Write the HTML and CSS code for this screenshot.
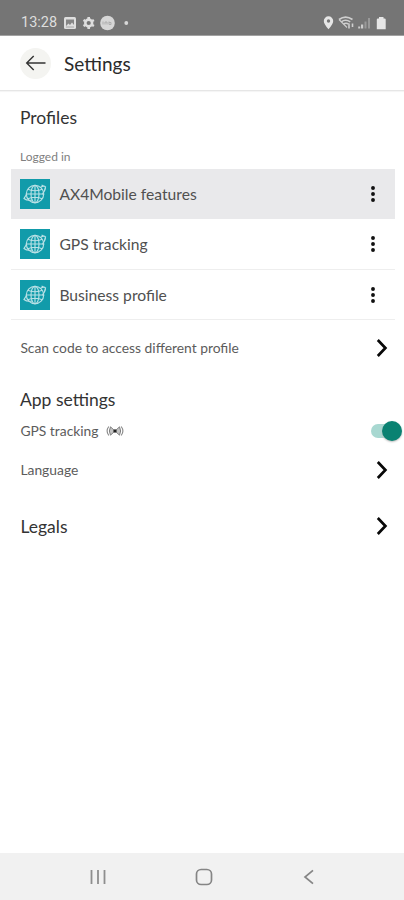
FILE: index.html
```html
<!DOCTYPE html>
<html lang="en">
<head>
<meta charset="utf-8">
<title>Settings</title>
<link rel="stylesheet" href="styles.css">
</head>
<body>
<svg class="defs" width="0" height="0" aria-hidden="true">
  <symbol id="globe" viewBox="0 0 30 30">
    <g fill="none" stroke="#b9e1e6" stroke-width="1.15" stroke-linecap="round">
      <circle cx="15" cy="15" r="8.700"/>
      <ellipse cx="15" cy="15" rx="4" ry="8.700"/>
      <path d="M15 6.300V23.700M6.300 15H23.700M8.500 10.500Q15 13 21.500 10.500M8.500 19.500Q15 17 21.500 19.500"/>
      <path d="M6.500 15.500L4 19.500Q7 22 12 21M21 8Q25 6 25.500 8.500Q25.500 11 22.500 15M22 6.200L25.500 7.800L24.500 11.500"/>
    </g>
  </symbol>
  <symbol id="dots" viewBox="0 0 6 18">
    <g fill="#111"><circle cx="3" cy="3" r="1.950"/><circle cx="3" cy="9" r="1.950"/><circle cx="3" cy="15" r="1.950"/></g>
  </symbol>
  <symbol id="chevron" viewBox="0 0 12 20">
    <path d="M1.800 2L9.400 10L1.800 18" fill="none" stroke="#080808" stroke-width="2.700"/>
  </symbol>
</svg>
<div class="screen">
  <div class="status">
    <span class="time">13:28</span>
    <svg class="status-left" width="68" height="16" viewBox="0 0 68 16">
      <rect x="1" y="2" width="12" height="12" rx="1.500" fill="#dedede"/>
      <path d="M3 11V4.500H11V10L9 7.500L7 10L5.500 8.500Z" fill="#858585"/>
      <path d="M3 12H11" stroke="#999" stroke-width=".8"/>
      <circle cx="25.700" cy="8" r="3.400" fill="none" stroke="#dedede" stroke-width="2.600"/>
      <path d="M25.700 2V4M25.700 12V14M20.500 5L22.200 6M29.200 10L30.900 11M20.500 11L22.200 10M29.200 6L30.900 5" stroke="#dedede" stroke-width="2.600"/>
      <circle cx="44.500" cy="8" r="7.300" fill="#d6d6d6"/>
      <path d="M40 6.500V9.500M42 9.500V7H44V9.500M46 6.500V9.500H48V7.500H46" fill="none" stroke="#aaa" stroke-width=".9"/>
      <circle cx="63.300" cy="8" r="1.900" fill="#d8d8d8"/>
    </svg>
    <svg class="status-right" width="66" height="16" viewBox="0 0 66 16">
      <path d="M5.500 14.300Q.8 9 .8 6A4.700 4.700 0 0 1 10.200 6Q10.200 9 5.500 14.300Z" fill="#e6e6e6"/>
      <circle cx="5.500" cy="6" r="1.700" fill="#777"/>
      <g fill="none" stroke="#cfcfcf">
        <path d="M16 4.500Q22.500-.2 29.500 4.500M18.300 6.800Q22.500 3.800 27.200 6.800M20.500 9Q23 7.400 25.500 9" stroke-width="1.600"/>
        <path d="M16 4.500L24 12.500" stroke-width="1.100"/>
        <path d="M26 8.500V13.500M29.500 12V8.500" stroke-width="1.600"/>
      </g>
      <path d="M35.200 13.500V11.500H37.200V13.500ZM38 13.500V9.500H40.200V13.500Z" fill="#ccc"/>
      <path d="M41.500 13.500V6.500H43.500V13.500ZM45 13.500V3H47V13.500Z" fill="#999"/>
      <path d="M53.800 14.300V4.500Q53.800 3.500 55 3.500H56V2H60.500V3.500H61.500Q62.700 3.500 62.700 4.500V14.300Z" fill="#e6e6e6"/>
    </svg>
  </div>
  <header class="appbar">
    <div class="back">
      <svg width="22" height="20" viewBox="0 0 22 20"><path d="M20.500 10H2M8.700 3L1.700 10L8.700 17" fill="none" stroke="#333" stroke-width="1.400"/></svg>
    </div>
    <h1>Settings</h1>
  </header>
  <main>
    <h2 class="profiles">Profiles</h2>
    <p class="logged">Logged in</p>
    <ul class="list">
      <li class="profile active"><span class="tile"><svg width="30" height="30"><use href="#globe"/></svg></span><span class="name">AX4Mobile features</span><svg width="6" height="18"><use href="#dots"/></svg></li>
      <li class="profile"><span class="tile"><svg width="30" height="30"><use href="#globe"/></svg></span><span class="name">GPS tracking</span><svg width="6" height="18"><use href="#dots"/></svg></li>
      <li class="profile"><span class="tile"><svg width="30" height="30"><use href="#globe"/></svg></span><span class="name">Business profile</span><svg width="6" height="18"><use href="#dots"/></svg></li>
    </ul>
    <div class="row scan"><span>Scan code to access different profile</span><svg width="12" height="20"><use href="#chevron"/></svg></div>
    <h2 class="app">App settings</h2>
    <div class="row gps">
      <span>GPS tracking</span>
      <svg class="signal" width="18" height="14" viewBox="0 0 18 14">
        <path d="M2.800 2.500Q-.6 7 2.800 11.500M15.200 2.500Q18.600 7 15.200 11.500" fill="none" stroke="#888" stroke-width="1.100"/>
        <path d="M4.500 2.800L9 7L4.500 11.200Q2.200 7 4.500 2.800ZM13.500 2.800L9 7L13.500 11.200Q15.800 7 13.500 2.800Z" fill="#c4c4c4" stroke="#777" stroke-width=".9"/>
        <circle cx="9" cy="7" r="1.700" fill="#222"/>
      </svg>
      <span class="switch"><span class="knob"></span></span>
    </div>
    <div class="row language"><span>Language</span><svg width="12" height="20"><use href="#chevron"/></svg></div>
    <div class="row legals"><h2>Legals</h2><svg width="12" height="20"><use href="#chevron"/></svg></div>
  </main>
  <nav class="nav">
    <svg width="16" height="16" viewBox="0 0 16 16"><path d="M1.500 1V15M8 1V15M14.500 1V15" stroke="#8e8e8e" stroke-width="1.800"/></svg>
    <svg class="home" width="18" height="18" viewBox="0 0 18 18"><rect x="1.500" y="1.500" width="15" height="15" rx="4.600" fill="none" stroke="#858585" stroke-width="1.700"/></svg>
    <svg width="12" height="16" viewBox="0 0 12 16"><path d="M10 1.300L2 8L10 14.700" fill="none" stroke="#858585" stroke-width="1.700"/></svg>
  </nav>
</div>
</body>
</html>
```
FILE: styles.css
```css
* { box-sizing: border-box; }
body { margin: 0; background: #fff; font-family: Lato, "Liberation Sans", sans-serif; }
h1, h2, p, ul { margin: 0; padding: 0; font-weight: 400; }
svg { display: block; flex: none; }
.defs { position: absolute; }
.screen { width: 404px; height: 900px; display: flex; flex-direction: column; overflow: hidden; }
.status { height: 36px; flex: none; background: #757575; border-bottom: 1px solid #a2a2a2; display: flex; align-items: center; padding: 11px 15px 0 21px; color: #dedede; }
.time { width: 42px; font: 14.5px/18px Roboto, sans-serif; white-space: nowrap; }
.status-right { margin-left: auto; }
.appbar { height: 55px; flex: none; display: flex; align-items: center; padding-left: 20px; border-bottom: 1px solid #e6e6e6; box-shadow: 0 1px 1px #f5f5f5; }
.back { width: 31px; height: 31px; border-radius: 50%; background: #f4f4f1; display: grid; place-items: center; margin-right: 13px; }
h1 { font-size: 19px; line-height: 24px; padding-top: 1px; color: #2b2b2b; }
main { flex: 1; }
h2 { font-size: 17.5px; line-height: 24px; color: #333; }
.profiles { padding: 15px 0 0 20px; }
.logged { padding: 19px 0 0 20px; height: 39px; font-size: 12px; line-height: 16px; color: #808080; }
.list { list-style: none; margin: 0 9px 0 11px; }
.profile { height: 50.3px; display: flex; align-items: center; padding: 1px 19.5px 0 9px; border-bottom: 1px solid #eee; }
.active { background: #e9e9eb; border-color: #e9e9eb; }
.tile { width: 30px; height: 30px; background: #119baa; }
.name { flex: 1; padding-left: 9.4px; font-size: 15.65px; color: #505050; }
.row { display: flex; align-items: center; justify-content: space-between; padding: 0 16px 0 20.4px; font-size: 13.85px; color: #5c5c5c; }
.scan { height: 56px; }
.app { padding: 12px 0 0 20px; height: 36px; }
.gps { height: 38px; justify-content: flex-start; padding-right: 2px; }
.signal { margin-left: 7px; }
.switch { width: 31px; height: 21px; margin-left: auto; display: flex; justify-content: flex-end; align-items: center; }
.switch::before { content: ""; width: 21px; height: 14px; margin-right: -10px; border-radius: 7px 0 0 7px; background: #a8d8d1; }
.knob { width: 20px; height: 20px; border-radius: 50%; background: #0a8272; box-shadow: 0 1px 2px #bbb; }
.language { height: 40px; }
.legals { height: 73px; }
.legals h2 { padding-top: 2px; }
.nav { height: 47px; flex: none; background: #f1f1f1; display: flex; align-items: center; justify-content: space-between; padding: 0 89px 0 90px; }
.home { margin-right: 2px; }
```
